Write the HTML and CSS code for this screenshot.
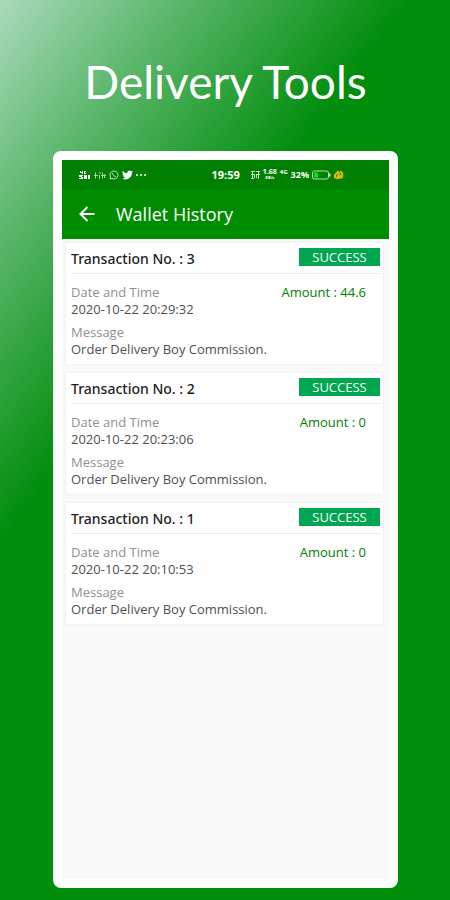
FILE: index.html
```html
<!DOCTYPE html>
<html lang="en">
<head>
<meta charset="utf-8">
<meta name="viewport" content="width=device-width, initial-scale=1">
<title>Delivery Tools</title>
<link rel="stylesheet" href="styles.css">
</head>
<body>
<div class="promo">
  <h1 class="promo-title">Delivery Tools</h1>
  <main class="phone">
    <div class="status-bar">
      <div class="status-left">
        <svg width="12" height="10" viewBox="0 0 12 10" fill="#fff" aria-hidden="true"><path d="M1 1h1v1h1V1h1v3H3V3H1zM5 1h2v1H6v1h1v1H5zM0 5h4v1H3v1h1v2H0V8h2V7H0zM5 5h3v4H5zM9 5h2v4H9z"/></svg>
        <svg width="12" height="10" viewBox="0 0 12 10" fill="none" stroke="#a5d2a5" aria-hidden="true"><path d="M1.500 2.500v6M0 5.500h4M6 2v2M5.500 5v4M8.500 2.500v6M7 5.500h5M10.500 4v4"/></svg>
        <svg width="10" height="10" viewBox="0 0 10 10" fill="none" stroke="#c3e3c3" aria-hidden="true"><path d="M1 9l.6-2A4 4 0 1 1 3 8.400zM3.500 3c0 2 1.500 3.500 3.500 3.500"/></svg>
        <svg width="11" height="10" viewBox="0 0 24 22" fill="#fff" aria-hidden="true"><path d="M24 3.500a10 10 0 0 1-2.800.8A5 5 0 0 0 23.300 1.600a10 10 0 0 1-3.100 1.200 4.900 4.900 0 0 0-8.400 4.500A14 14 0 0 1 1.700 2.100a4.900 4.900 0 0 0 1.500 6.600 5 5 0 0 1-2.200-.6 4.900 4.900 0 0 0 3.900 4.900 5 5 0 0 1-2.200.1 4.900 4.900 0 0 0 4.600 3.400A10 10 0 0 1 0 18.500 14 14 0 0 0 21.500 6z"/></svg>
        <svg width="11" height="10" viewBox="0 0 11 10" fill="#c3e3c3" aria-hidden="true"><path d="M0 4h2v2H0zM4 4h2v2H4zM8 4h2v2H8z"/></svg>
      </div>
      <time class="clock">19:59</time>
      <div class="status-right">
        <svg width="9" height="10" viewBox="0 0 9 10" fill="none" stroke="#c3e3c3" aria-hidden="true"><path d="M0 1.500h4M5 1.500h4M0 4.500h4M5 4.500h4M1.500 1v8M3.500 4v4M5.500 4v4M7.500 1v8M0 8.500h3"/></svg>
        <span class="rate"><span class="rate-value">1.68</span><span class="rate-unit">KB/s</span></span>
        <span class="network">4G</span>
        <span class="percent">32%</span>
        <svg width="19" height="10" viewBox="0 0 19 10" aria-hidden="true"><rect x=".5" y="1" width="16" height="8" rx="2" fill="none" stroke="#b8dfb8"/><path d="M2 2.500h4v5H2z" fill="#00e61c"/><path d="M17 3.500h1.500v3H17z" fill="#b8dfb8"/></svg>
        <svg width="10" height="10" viewBox="0 0 10 10" fill="none" stroke="#e5b900" stroke-width="2" aria-hidden="true"><path d="M1 8V5l3-3 1 2-2 4h2l2-3M6 1.500c3 1 3 4 1 7"/></svg>
      </div>
    </div>
    <header class="app-bar">
      <button class="back" type="button" aria-label="Back">
        <svg width="16" height="16" viewBox="0 0 16 16" fill="none" stroke="#fff" stroke-width="2" aria-hidden="true"><path d="M15.500 8H2M8.500 1L1.500 8l7 7"/></svg>
      </button>
      <h2 class="app-title">Wallet History</h2>
    </header>
    <section class="list">
      <article class="card">
        <div class="card-head"><h3 class="number">Transaction No. : 3</h3><span class="badge">SUCCESS</span></div>
        <div class="card-body">
          <dl class="details"><dt>Date and Time</dt><dd>2020-10-22 20:29:32</dd><dt>Message</dt><dd>Order Delivery Boy Commission.</dd></dl>
          <p class="amount">Amount : 44.6</p>
        </div>
      </article>
      <article class="card">
        <div class="card-head"><h3 class="number">Transaction No. : 2</h3><span class="badge">SUCCESS</span></div>
        <div class="card-body">
          <dl class="details"><dt>Date and Time</dt><dd>2020-10-22 20:23:06</dd><dt>Message</dt><dd>Order Delivery Boy Commission.</dd></dl>
          <p class="amount">Amount : 0</p>
        </div>
      </article>
      <article class="card">
        <div class="card-head"><h3 class="number">Transaction No. : 1</h3><span class="badge">SUCCESS</span></div>
        <div class="card-body">
          <dl class="details"><dt>Date and Time</dt><dd>2020-10-22 20:10:53</dd><dt>Message</dt><dd>Order Delivery Boy Commission.</dd></dl>
          <p class="amount">Amount : 0</p>
        </div>
      </article>
    </section>
  </main>
</div>
</body>
</html>
```
FILE: styles.css
```css
* { box-sizing: border-box; margin: 0; padding: 0; }

body { font-family: "Open Sans", "Noto Sans", sans-serif; }

svg { display: block; flex: none; }

.promo {
  display: flex;
  flex-direction: column;
  min-height: 100vh;
  padding: 52px 52px 12px 53px;
  background: linear-gradient(127deg, #a9dabb 0, #58b568 150px, #008d0c 328px);
}

.promo-title {
  margin-bottom: 39px;
  color: #fff;
  font: 400 46px/60px Lato, sans-serif;
  text-align: center;
  white-space: nowrap;
}

.phone {
  display: flex;
  flex: 1;
  flex-direction: column;
  padding: 9px;
  border-radius: 8px;
  background: #fff;
}

.status-bar {
  display: flex;
  align-items: center;
  height: 29px;
  padding: 0 45px 0 17px;
  background: #008000;
  color: #fff;
  font-weight: 700;
}

.status-left, .status-right { display: flex; align-items: center; gap: 3px; }

.clock { margin: 0 11px 0 auto; font-size: 11px; }

.rate {
  display: flex;
  flex-direction: column;
  text-align: center;
}

.rate-value { font-size: 7px; line-height: 7px; }
.rate-unit { font-size: 4px; line-height: 6px; }

.network { align-self: flex-start; font-size: 6px; line-height: 8px; }

.percent { font-size: 9px; }

.app-bar {
  display: flex;
  align-items: center;
  gap: 21px;
  height: 50px;
  padding: 0 17px;
  background: #008c00;
  color: #fff;
}

.back { border: 0; background: none; cursor: pointer; }

.app-title { font-size: 18px; font-weight: 400; line-height: 24px; }

.list {
  display: flex;
  flex: 1;
  flex-direction: column;
  gap: 9px;
  padding: 4px 6px 0 4px;
  background: #f9f9f9;
}

.card {
  padding: 5px 3px 6px 5px;
  background: #fff;
  box-shadow: 0 0 3px #e9e9e9;
}

.card-head {
  display: flex;
  align-items: flex-start;
  justify-content: space-between;
  border-bottom: 1px solid #ececec;
}

.number {
  padding: 1px 0 4px;
  color: #222;
  font-family: "Noto Sans", sans-serif;
  font-size: 14px;
  font-weight: 500;
  line-height: 20px;
}

.badge {
  width: 81px;
  background: #00a650;
  color: #fff;
  font-size: 13px;
  font-weight: 500;
  line-height: 18px;
  text-align: center;
}

.card-body {
  display: flex;
  justify-content: space-between;
  padding: 10px 14px 0 0;
  font-size: 13px;
  line-height: 17px;
}

.details dt { color: #909090; }
.details dd { color: #505050; }
.details dd + dt { margin-top: 6px; }

.amount { color: #008000; }
```
